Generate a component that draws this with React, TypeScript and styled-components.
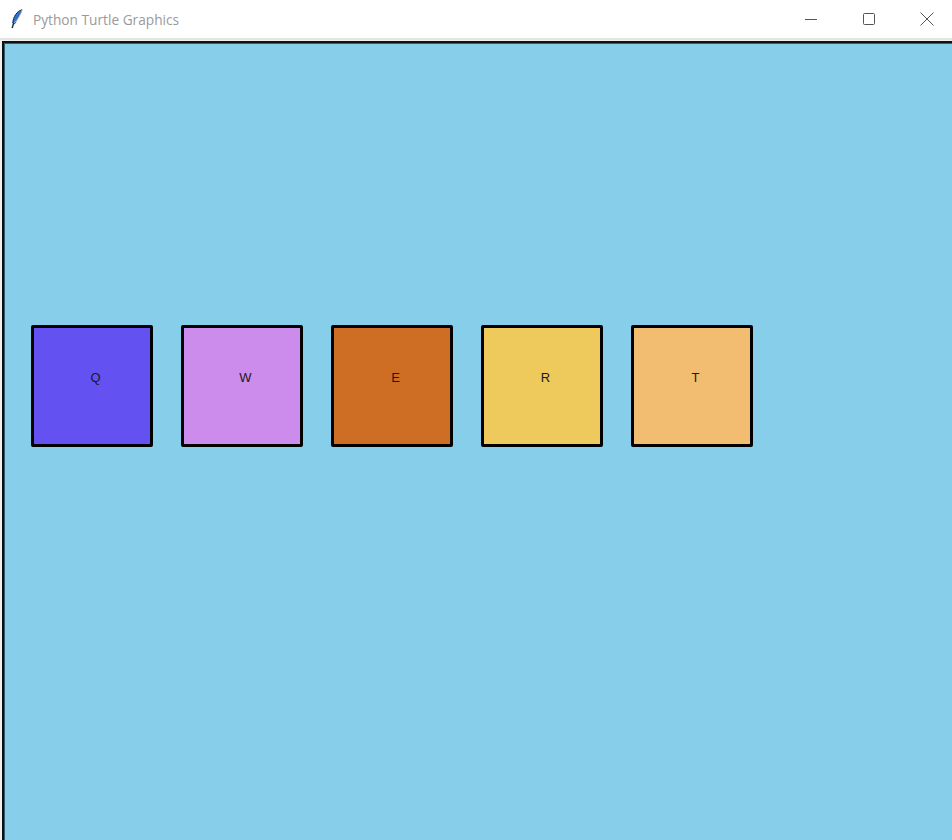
import React from "react";
import styled, { createGlobalStyle } from "styled-components";

const GlobalStyle = createGlobalStyle`
  html, body {
    margin: 0;
    padding: 0;
    width: 952px;
    height: 840px;
    overflow: hidden;
    background: #f0f0f0;
  }
`;

const Window = styled.div`
  width: 952px;
  height: 840px;
  display: flex;
  flex-direction: column;
  overflow: hidden;
  font-family: "Open Sans", "Noto Sans", sans-serif;
`;

const TitleBar = styled.div`
  height: 38px;
  flex: none;
  background: #ffffff;
  display: flex;
  align-items: center;
  border-bottom: 2px solid #e4e4e4;
  margin-right: -4px;
`;

const AppIcon = styled.div`
  width: 33px;
  display: flex;
  justify-content: center;
`;

const Title = styled.div`
  flex: 1;
  font-size: 13.7px;
  color: #9a9a9a;
`;

const WinButton = styled.div`
  width: 58px;
  height: 38px;
  display: flex;
  align-items: center;
  justify-content: center;
`;

const Body = styled.div`
  flex: 1;
  background: #f0f0f0;
  padding: 1px 0 0 2px;
  display: flex;
`;

const Canvas = styled.div`
  flex: 1;
  background: #87ceea;
  border-top: 2px solid #111;
  border-left: 2px solid #111;
  box-shadow: inset 1px 1px 0 #2d5f6e;
  padding: 282px 0 0 27px;
  display: flex;
  align-items: flex-start;
  gap: 28px;
`;

const Key = styled.div<{ $fill: string }>`
  flex: none;
  box-sizing: border-box;
  width: 122px;
  height: 122px;
  background: ${(p) => p.$fill};
  border: 3px solid #000;
  border-radius: 2px;
  display: flex;
  justify-content: center;
  padding-top: 42px;
  padding-left: 7px;
  font-family: "Liberation Sans", Arial, sans-serif;
  font-size: 13px;
  color: #1a1a1a;
`;

const keys = [
  { label: "Q", fill: "#6451f2" },
  { label: "W", fill: "#cb8ceb" },
  { label: "E", fill: "#cd6e24" },
  { label: "R", fill: "#eeca5c" },
  { label: "T", fill: "#f2bd70" },
];

export default function App() {
  return (
    <Window>
      <GlobalStyle />
      <TitleBar>
        <AppIcon>
          <svg width="12" height="20" viewBox="0 0 12 20">
            <path d="M11 0.8 C6 2 2 8 1.8 14 L3.6 14.8 C6 10 9.5 5.5 11 0.8 Z" fill="#2f6fd0" stroke="#1a2a4a" strokeWidth="1" />
            <path d="M11 0.8 C9.5 6 6.5 10.5 3.2 14.2" fill="none" stroke="#a8ccf4" strokeWidth="0.9" />
            <path d="M2.6 14.2 L1.2 19" stroke="#1a2a4a" strokeWidth="1.4" />
          </svg>
        </AppIcon>
        <Title>Python Turtle Graphics</Title>
        <WinButton>
          <svg width="12" height="12" viewBox="0 0 12 12">
            <path d="M0 6.5 H12" stroke="#555" strokeWidth="1" />
          </svg>
        </WinButton>
        <WinButton>
          <svg width="12" height="12" viewBox="0 0 12 12">
            <rect x="0.5" y="0.5" width="11" height="11" rx="1" fill="none" stroke="#555" strokeWidth="1" />
          </svg>
        </WinButton>
        <WinButton>
          <svg width="14" height="14" viewBox="0 0 14 14">
            <path d="M0.5 0.5 L13.5 13.5 M13.5 0.5 L0.5 13.5" stroke="#555" strokeWidth="1" />
          </svg>
        </WinButton>
      </TitleBar>
      <Body>
        <Canvas>
          {keys.map((k) => (
            <Key key={k.label} $fill={k.fill}>
              {k.label}
            </Key>
          ))}
        </Canvas>
      </Body>
    </Window>
  );
}
